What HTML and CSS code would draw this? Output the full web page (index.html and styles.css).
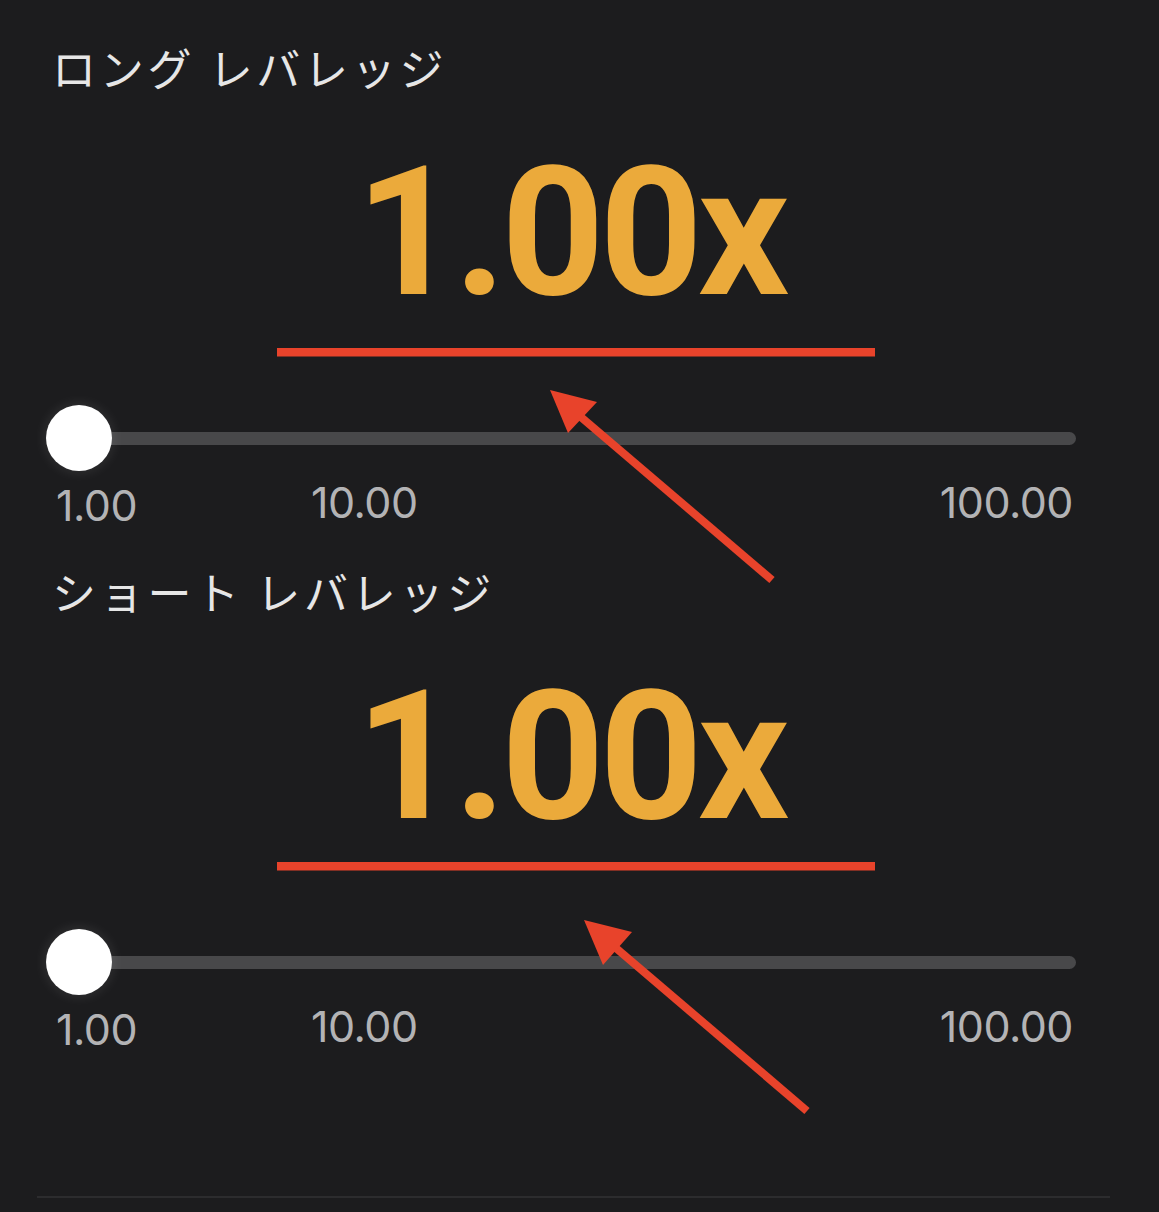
FILE: index.html
```
<!DOCTYPE html>
<html lang="ja">
<head>
<meta charset="utf-8">
<title>レバレッジ</title>
<link rel="stylesheet" href="styles.css">
</head>
<body>
<div class="page">
  <section class="lev">
    <h2 class="lev-title">ロング レバレッジ</h2>
    <div class="lev-value">1.00x</div>
    <div class="slider">
      <div class="track"></div>
      <div class="thumb"></div>
    </div>
    <div class="ticks">
      <span class="tick">1.00</span>
      <span class="tick tick-mid">10.00</span>
      <span class="tick tick-end">100.00</span>
    </div>
  </section>
  <section class="lev">
    <h2 class="lev-title">ショート レバレッジ</h2>
    <div class="lev-value">1.00x</div>
    <div class="slider">
      <div class="track"></div>
      <div class="thumb"></div>
    </div>
    <div class="ticks">
      <span class="tick">1.00</span>
      <span class="tick tick-mid">10.00</span>
      <span class="tick tick-end">100.00</span>
    </div>
  </section>
  <div class="divider"></div>

  <svg class="annot" width="1159" height="1212" viewBox="0 0 1159 1212">
    <rect x="277" y="348" width="598" height="8.5" fill="#e8432b"/>
    <rect x="277" y="862" width="598" height="8.5" fill="#e8432b"/>
    <line x1="772" y1="580" x2="575" y2="412" stroke="#e8432b" stroke-width="8"/>
    <polygon points="550,390 597,402 568,433" fill="#e8432b"/>
    <line x1="807" y1="1111" x2="610" y2="943" stroke="#e8432b" stroke-width="8"/>
    <polygon points="584,920 632,932 603,965" fill="#e8432b"/>
  </svg>
</div>
</body>
</html>
```
FILE: styles.css
```
html, body {
  margin: 0;
  padding: 0;
  background: #1c1c1e;
}
.page {
  position: relative;
  width: 1159px;
  height: 1212px;
  overflow: hidden;
  background: #1c1c1e;
}
.lev {
  height: 524px;
  display: flex;
  flex-direction: column;
  padding: 0 83px 0 52px;
  box-sizing: border-box;
}
.lev > * {
  flex-shrink: 0;
}
.lev-title {
  margin: 41px 0 0 0;
  font-family: "Noto Sans CJK JP", "Noto Sans", sans-serif;
  font-weight: 400;
  font-size: 44px;
  line-height: 52px;
  letter-spacing: 3.7px;
  color: #e6e6e6;
}
.lev-value {
  margin-top: 50px;
  font-family: Roboto, "Liberation Sans", sans-serif;
  font-weight: 700;
  font-size: 180px;
  line-height: 180px;
  height: 180px;
  color: #ebaa3b;
  text-align: center;
  letter-spacing: -5px;
  padding-left: 12px;
}
.slider {
  position: relative;
  margin-top: 82px;
  height: 66px;
  display: flex;
  align-items: center;
  padding-left: 27px;
}
.track {
  flex: 1;
  height: 13px;
  border-radius: 7px;
  background: #48484a;
}
.thumb {
  position: absolute;
  left: -6px;
  top: 0;
  width: 66px;
  height: 66px;
  border-radius: 50%;
  background: #ffffff;
  box-shadow: 0 0 14px rgba(255, 255, 255, 0.12);
}
.ticks {
  display: flex;
  margin-top: 16px;
  padding-left: 4px;
  padding-right: 3px;
  font-family: Inter, "Noto Sans", sans-serif;
  font-size: 43px;
  line-height: 36px;
  height: 36px;
  letter-spacing: -0.5px;
  color: #b3b3b5;
}
.tick-mid {
  margin-left: 174px;
  position: relative;
  top: -3px;
}
.tick-end {
  margin-left: auto;
  position: relative;
  top: -3px;
}
.divider {
  margin: 148px 49px 0 37px;
  height: 2px;
  background: #2c2c2e;
}
.annot {
  position: absolute;
  left: 0;
  top: 0;
  pointer-events: none;
}
```
